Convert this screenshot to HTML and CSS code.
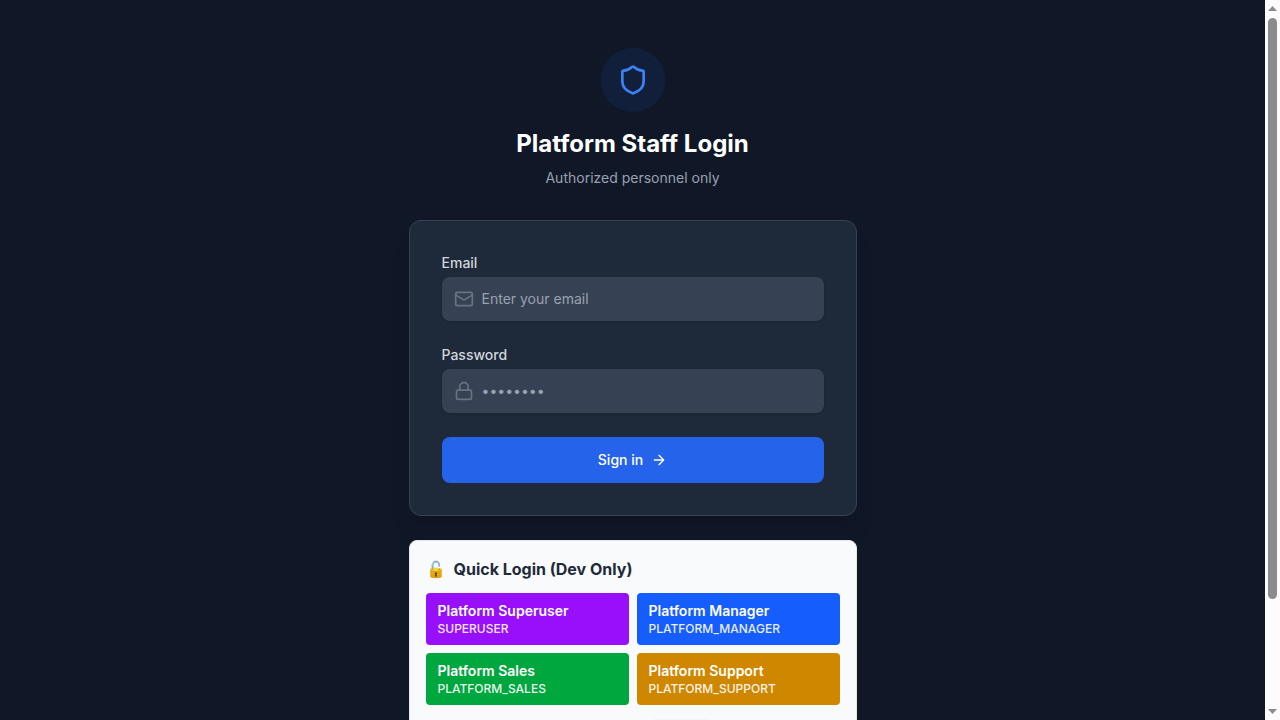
FILE: index.html
```html
<!DOCTYPE html>
<html lang="en">
<head>
<meta charset="utf-8">
<meta name="viewport" content="width=device-width, initial-scale=1">
<title>Platform Staff Login</title>
<link rel="stylesheet" href="styles.css">
</head>
<body>
<main class="page">
  <div class="column">
    <header class="intro">
      <div class="badge">
        <svg class="badge-icon" viewBox="0 0 24 24" aria-hidden="true"><path d="M20 13c0 5-3.5 7.5-7.66 8.95a1 1 0 0 1-.67-.01C7.5 20.5 4 18 4 13V6a1 1 0 0 1 1-1c2 0 4.5-1.2 6.24-2.72a1.17 1.17 0 0 1 1.52 0C14.51 3.81 17 5 19 5a1 1 0 0 1 1 1z"/></svg>
      </div>
      <h1 class="title">Platform Staff Login</h1>
      <p class="subtitle">Authorized personnel only</p>
    </header>

    <form class="card">
      <div class="field">
        <label class="label" for="email">Email</label>
        <div class="control">
          <svg class="control-icon" viewBox="0 0 24 24" aria-hidden="true"><rect x="2" y="4" width="20" height="16" rx="2"/><path d="m22 7-8.991 5.727a2 2 0 0 1-2.009 0L2 7"/></svg>
          <input class="input" id="email" type="email" placeholder="Enter your email">
        </div>
      </div>
      <div class="field">
        <label class="label" for="password">Password</label>
        <div class="control">
          <svg class="control-icon" viewBox="0 0 24 24" aria-hidden="true"><rect x="3" y="11" width="18" height="11" rx="2"/><path d="M7 11V7a5 5 0 0 1 10 0v4"/></svg>
          <input class="input" id="password" type="password" placeholder="••••••••">
        </div>
      </div>
      <button class="submit" type="submit">
        Sign in
        <svg class="submit-icon" viewBox="0 0 24 24" aria-hidden="true"><path d="M5 12h14M12 5l7 7-7 7"/></svg>
      </button>
    </form>

    <section class="quick">
      <h2 class="quick-title"><span class="emoji">🔓</span><span>Quick Login (Dev Only)</span></h2>
      <div class="quick-grid">
        <button class="account purple" type="button"><span class="name">Platform Superuser</span><span class="role">SUPERUSER</span></button>
        <button class="account blue" type="button"><span class="name">Platform Manager</span><span class="role">PLATFORM_MANAGER</span></button>
        <button class="account green" type="button"><span class="name">Platform Sales</span><span class="role">PLATFORM_SALES</span></button>
        <button class="account amber" type="button"><span class="name">Platform Support</span><span class="role">PLATFORM_SUPPORT</span></button>
      </div>
      <div class="quick-note"><span class="chip"></span></div>
    </section>
  </div>
</main>
<div class="scrollbar" aria-hidden="true">
  <svg class="scroll-arrow" viewBox="0 0 9 5"><path d="M4.5 0 9 5H0z"/></svg>
  <div class="scroll-track"><div class="scroll-thumb"></div></div>
  <svg class="scroll-arrow" viewBox="0 0 9 5"><path d="M0 0h9L4.5 5z"/></svg>
</div>
</body>
</html>
```
FILE: styles.css
```css
*, *::before, *::after { box-sizing: border-box; }

html { scrollbar-width: none; }

body {
  display: flex;
  align-items: flex-start;
  margin: 0;
  font-family: Inter, "Liberation Sans", sans-serif;
  font-size: 14px;
  line-height: 20px;
  background: #101828;
  color: #fff;
}

h1, h2, p { margin: 0; }
button, input { font: inherit; }

.page {
  display: flex;
  flex: 1;
  justify-content: center;
  min-width: 0;
  padding: 48px 16px;
}

.column { width: 100%; max-width: 448px; }

.intro {
  display: flex;
  flex-direction: column;
  align-items: center;
  margin-bottom: 32px;
  text-align: center;
}

.badge {
  display: flex;
  padding: 16px;
  margin-bottom: 16px;
  border-radius: 50%;
  background: rgb(37 99 235 / 10%);
}

svg {
  fill: none;
  stroke: currentColor;
  stroke-width: 2;
  stroke-linecap: round;
  stroke-linejoin: round;
}

.badge-icon { width: 32px; height: 32px; color: #3b82f6; }

.title { font-size: 24px; line-height: 32px; font-weight: 700; }

.subtitle { margin-top: 8px; color: #99a1af; }

.card {
  display: flex;
  flex-direction: column;
  gap: 24px;
  padding: 32px;
  border: 1px solid #364153;
  border-radius: 12px;
  background: #1e2939;
  box-shadow: 0 20px 25px -5px rgb(0 0 0 / 10%), 0 8px 10px -6px rgb(0 0 0 / 10%);
}

.field { display: flex; flex-direction: column; gap: 4px; }

.label { font-weight: 500; color: #d1d5dc; }

.control {
  display: flex;
  align-items: center;
  gap: 8px;
  padding: 0 12px;
  border-radius: 8px;
  background: #364153;
  box-shadow: 0 1px 3px rgb(0 0 0 / 10%), 0 1px 2px -1px rgb(0 0 0 / 10%);
}

.control:focus-within { outline: 2px solid #3b82f6; }

.control-icon { flex: none; width: 20px; height: 20px; color: #6a7282; }

.input {
  flex: 1;
  min-width: 0;
  padding: 12px 0;
  border: 0;
  outline: 0;
  background: transparent;
  color: #fff;
}

.input::placeholder { color: #99a1af; opacity: 1; }

.submit {
  display: flex;
  align-items: center;
  justify-content: center;
  gap: 8px;
  padding: 13px 16px;
  border: 0;
  border-radius: 8px;
  background: #2563eb;
  color: #fff;
  font-weight: 500;
}

.submit-icon { width: 16px; height: 16px; }

.quick {
  margin-top: 24px;
  padding: 16px;
  border: 1px solid #e5e7eb;
  border-radius: 8px;
  background: #f9fafb;
  color: #1e2939;
}

.quick-title {
  display: flex;
  gap: 8px;
  margin-bottom: 12px;
  font-size: 16px;
  line-height: 24px;
  font-weight: 700;
}

.emoji { font-weight: 400; }

.quick-grid { display: grid; grid-template-columns: 1fr 1fr; gap: 8px; }

.account {
  display: flex;
  flex-direction: column;
  padding: 8px 12px;
  border: 0;
  border-radius: 4px;
  color: #fff;
  font-weight: 500;
  text-align: left;
}

.name { font-weight: 600; }
.role { font-size: 12px; line-height: 16px; opacity: 0.9; }

.purple { background: #9810fa; }
.blue { background: #155dfc; }
.green { background: #00a63e; }
.amber { background: #d08700; }

.quick-note {
  display: flex;
  justify-content: center;
  padding: 14px 0 56px 96px;
}

.chip { width: 60px; height: 18px; border-radius: 4px; background: #f3f4f6; }

.scrollbar {
  position: sticky;
  top: 0;
  display: flex;
  flex: none;
  flex-direction: column;
  align-items: center;
  gap: 7px;
  width: 15px;
  height: 100vh;
  padding: 6px 0;
  background: #fcfcfc;
}

.scroll-arrow { width: 9px; height: 5px; fill: #8b8b8b; stroke: none; }
.scroll-track { flex: 1; width: 9px; }
.scroll-thumb { height: 85%; border-radius: 5px; background: #8b8b8b; }
```
